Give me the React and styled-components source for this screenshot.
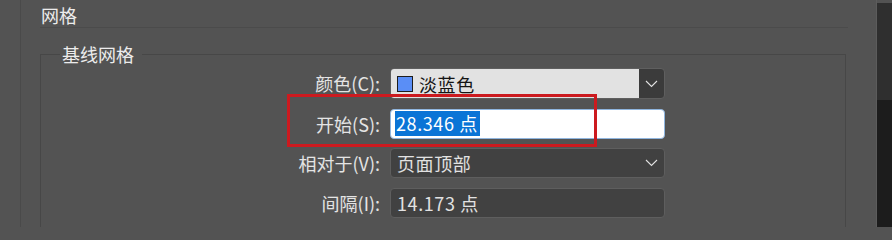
import React from "react";
import styled, { createGlobalStyle } from "styled-components";

const Global = createGlobalStyle`
  html, body { margin: 0; padding: 0; background: #535353; }
  body { font-family: "Noto Sans CJK SC", "Noto Sans", sans-serif; }
  * { box-sizing: border-box; }
`;

const Page = styled.div`
  display: flex;
  width: 892px;
  height: 227px;
  overflow: hidden;
  background: #535353;
`;

const Gutter = styled.div`
  width: 21px;
  flex: none;
  border-right: 1px solid #4a4a4a;
`;

const Main = styled.div`
  flex: 1;
  display: flex;
  flex-direction: column;
  min-width: 0;
`;

const Header = styled.div`
  height: 31px;
  margin: 0 28px 0 19px;
  padding: 3px 0 0 1px;
  border-bottom: 1px solid #4b4b4b;
  color: #ececec;
  font-size: 18px;
  line-height: 24px;
`;

const Group = styled.section`
  margin: 26px 30px 0 19px;
  padding: 0 0 12px 0;
  border: 1px solid #474747;
  border-bottom: none;
  flex: 1;
`;

const Legend = styled.div`
  width: fit-content;
  margin: -14px 0 0 19px;
  padding: 0 8px 0 2px;
  background: #535353;
  color: #ececec;
  font-size: 18px;
  line-height: 26px;
`;

const Form = styled.div`
  position: relative;
  display: grid;
  grid-template-columns: 339px 275px;
  column-gap: 10px;
  row-gap: 9.5px;
  margin-top: 1px;
`;

const Label = styled.label`
  display: flex;
  align-items: center;
  justify-content: flex-end;
  height: 30px;
  color: #e4e4e4;
  font-size: 18px;
  white-space: nowrap;
`;

const Field = styled.div`
  display: flex;
  align-items: center;
  height: ${(p) => (p.$tall ? 31 : 30)}px;
  border: 1px solid ${(p) => p.$border};
  border-radius: 4px;
  background: ${(p) => p.$bg};
  color: ${(p) => p.$fg};
  font-size: 18px;
  letter-spacing: 0.6px;
  overflow: hidden;
`;

const ValueText = styled.div`
  flex: 1;
  display: flex;
  align-items: center;
  gap: 6px;
  padding-left: ${(p) => p.$pad || 6}px;
  height: 100%;
  background: ${(p) => p.$bg || "transparent"};
  white-space: nowrap;
`;

const Swatch = styled.span`
  width: 16px;
  height: 16px;
  background: #5a8ef6;
  border: 1px solid #1d1d1d;
  flex: none;
`;

const Selected = styled.span`
  background: #0a74d6;
  color: #ffffff;
  line-height: 25px;
  padding: 0 2px 0 1px;
`;

const DropButton = styled.div`
  width: 25px;
  height: 100%;
  display: flex;
  align-items: center;
  justify-content: center;
  background: ${(p) => p.$bg || "transparent"};
  flex: none;
`;

const Highlight = styled.div`
  position: absolute;
  left: 246px;
  top: 26px;
  width: 310px;
  height: 53px;
  border: 3px solid #cc1a1f;
  pointer-events: none;
`;

const Side = styled.div`
  width: 16px;
  flex: none;
  border-left: 1px solid #5c5c5c;
  padding-top: 3px;
  display: flex;
  flex-direction: column;
`;

const SideTop = styled.div`
  height: 97px;
  background: #2f2f2f;
`;

const SideBottom = styled.div`
  flex: 1;
  background: #1c1c1c;
`;

const Chevron = () => (
  <svg width="13" height="8" viewBox="0 0 13 8">
    <polyline points="1,1 6.5,6.5 12,1" fill="none" stroke="#e0e0e0" strokeWidth="1.1" />
  </svg>
);

export default function App() {
  return (
    <Page>
      <Global />
      <Gutter />
      <Main>
        <Header>网格</Header>
        <Group>
          <Legend>基线网格</Legend>
          <Form>
            <Label>颜色(C):</Label>
            <Field $tall $border="#5f5f5f" $bg="#3b3b3b" $fg="#141414">
              <ValueText $bg="#e2e2e2">
                <Swatch />
                淡蓝色
              </ValueText>
              <DropButton>
                <Chevron />
              </DropButton>
            </Field>

            <Label>开始(S):</Label>
            <Field $border="#8fb5de" $bg="#ffffff" $fg="#111111">
              <ValueText $pad={4}>
                <Selected>28.346 点</Selected>
              </ValueText>
            </Field>

            <Label>相对于(V):</Label>
            <Field $border="#5e5e5e" $bg="#414141" $fg="#e2e2e2">
              <ValueText>页面顶部</ValueText>
              <DropButton>
                <Chevron />
              </DropButton>
            </Field>

            <Label>间隔(I):</Label>
            <Field $border="#5e5e5e" $bg="#414141" $fg="#e2e2e2">
              <ValueText>14.173 点</ValueText>
            </Field>

            <Highlight />
          </Form>
        </Group>
      </Main>
      <Side>
        <SideTop />
        <SideBottom />
      </Side>
    </Page>
  );
}
